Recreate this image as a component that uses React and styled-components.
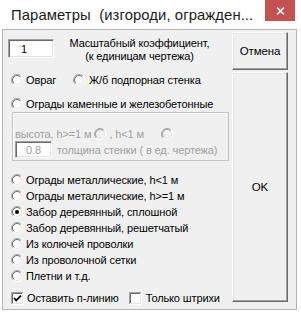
import React from "react";
import styled, { createGlobalStyle } from "styled-components";

const Global = createGlobalStyle`
  html, body { margin: 0; padding: 0; background: #fff; }
  body { font-family: "Liberation Sans", Arial, sans-serif; }
`;

const Window = styled.div`
  width: 301px;
  height: 317px;
  background: #fff;
  display: flex;
  flex-direction: column;
  overflow: hidden;
`;

const TitleBar = styled.div`
  height: 29px;
  display: flex;
  justify-content: space-between;
  align-items: flex-start;
  flex-shrink: 0;
`;

const Title = styled.div`
  padding: 7px 0 0 11px;
  font-family: "Liberation Sans", Arial, sans-serif;
  font-size: 14.8px;
  letter-spacing: 0.1px;
  line-height: 16px;
  color: #1a1a1a;
  white-space: pre;
`;

const CloseBtn = styled.div`
  width: 30px;
  height: 21px;
  margin-right: 6px;
  background: #c75050;
  display: flex;
  align-items: center;
  justify-content: center;
`;

const Client = styled.div`
  margin: 0 4px 7px 2px;
  height: 281px;
  box-sizing: border-box;
  border: 1px solid #b4b4b4;
  background: #f0f0f0;
  display: flex;
  font-family: "Liberation Sans", Arial, sans-serif;
  font-size: 11px;
  letter-spacing: -0.12px;
  color: #000;
`;

const LeftCol = styled.div`
  width: 226px;
  display: flex;
  flex-direction: column;
`;

const RightCol = styled.div`
  margin-left: 3px;
  width: 56px;
  padding-top: 2px;
  display: flex;
  flex-direction: column;
  gap: 2px;
`;

const Button = styled.div`
  height: ${(p) => p.$h}px;
  box-sizing: border-box;
  border: 1px solid;
  border-color: #fff #696969 #696969 #fff;
  box-shadow: inset -1px -1px 0 #a0a0a0, inset 1px 1px 0 #e3e3e3;
  background: #f0f0f0;
  display: flex;
  align-items: center;
  justify-content: center;
  font-size: 11.5px;
`;

const TopRow = styled.div`
  margin-top: 6px;
  height: 28px;
  display: flex;
  align-items: flex-start;
`;

const TextBox = styled.div`
  margin-left: ${(p) => p.$ml || 0}px;
  margin-top: ${(p) => p.$mt || 0}px;
  width: ${(p) => p.$w}px;
  height: ${(p) => p.$h}px;
  box-sizing: border-box;
  border: 1px solid;
  border-color: #a0a0a0 #fff #fff #a0a0a0;
  box-shadow: inset 1px 1px 0 #696969, inset -1px -1px 0 #e3e3e3;
  background: #fff;
  color: ${(p) => (p.$disabled ? "#a0a0a0" : "#000")};
  display: flex;
  align-items: center;
  justify-content: ${(p) => (p.$center ? "center" : "flex-start")};
  padding-left: ${(p) => (p.$center ? 0 : 12)}px;
  flex-shrink: 0;
`;

const ScaleLabel = styled.div`
  width: 171px;
  text-align: center;
  line-height: 13px;
  margin-top: 1px;
`;

const Row = styled.div`
  height: 16px;
  margin-top: ${(p) => p.$mt || 0}px;
  padding-left: 8px;
  display: flex;
  align-items: center;
`;

const Option = styled.label`
  display: flex;
  align-items: center;
  gap: ${(p) => (p.$gap ?? 3)}px;
  margin-right: ${(p) => p.$mr || 0}px;
  white-space: nowrap;
`;

const Frame = styled.div`
  margin-left: 9px;
  width: 217px;
  height: 49px;
  box-sizing: border-box;
  border: 1px solid #c4c4c4;
  box-shadow: inset 1px 1px 0 #fff;
  display: flex;
  flex-direction: column;
  padding: 14px 0 0 2px;
`;

const FrameRow = styled.div`
  height: ${(p) => p.$h}px;
  display: flex;
  align-items: center;
  gap: ${(p) => p.$gap || 0}px;
  color: #a0a0a0;
  white-space: pre;
`;

const Spaced = styled.span`
  display: inline-flex;
  align-items: center;
  margin-left: ${(p) => p.$ml || 0}px;
`;

const Radio = ({ checked, disabled }) => (
  <svg width="12" height="12" viewBox="0 0 12 12" style={{ flexShrink: 0 }}>
    <circle cx="6" cy="6" r="5" fill={disabled ? "#f0f0f0" : "#fff"} />
    <path d="M2.111 9.889 A5.5 5.5 0 0 1 9.889 2.111" fill="none" stroke="#a0a0a0" />
    <path d="M2.111 9.889 A5.5 5.5 0 0 0 9.889 2.111" fill="none" stroke="#fff" />
    <path d="M2.818 9.182 A4.5 4.5 0 0 1 9.182 2.818" fill="none" stroke={disabled ? "#a0a0a0" : "#696969"} />
    <path d="M2.818 9.182 A4.5 4.5 0 0 0 9.182 2.818" fill="none" stroke="#e3e3e3" />
    {checked && <circle cx="6" cy="6" r="2" fill="#000" />}
  </svg>
);

const Check = ({ checked }) => (
  <svg width="13" height="13" viewBox="0 0 13 13" style={{ flexShrink: 0 }}>
    <rect x="0" y="0" width="13" height="13" fill="#fff" />
    <path d="M0.5 13 V0.5 H13" fill="none" stroke="#a0a0a0" />
    <path d="M1.5 12 V1.5 H12" fill="none" stroke="#696969" />
    <path d="M0 12.5 H12.5 V0" fill="none" stroke="#fff" />
    <path d="M1 11.5 H11.5 V1" fill="none" stroke="#e3e3e3" />
    {checked && (
      <path d="M3 6 L5.2 8.4 L10 3.6" fill="none" stroke="#000" strokeWidth="1.8" />
    )}
  </svg>
);

const listItems = [
  "Ограды металлические, h<1 м",
  "Ограды металлические, h>=1 м",
  "Забор деревянный, сплошной",
  "Забор деревянный, решетчатый",
  "Из колючей проволки",
  "Из проволочной сетки",
  "Плетни и т.д.",
];

export default function App() {
  return (
    <>
      <Global />
      <Window>
        <TitleBar>
          <Title>{"Параметры  (изгороди, огражден..."}</Title>
          <CloseBtn>
            <svg width="9" height="8" viewBox="0 0 9 8">
              <path d="M1 0.5 L8 7.5 M8 0.5 L1 7.5" stroke="#fff" strokeWidth="1.6" />
            </svg>
          </CloseBtn>
        </TitleBar>
        <Client>
          <LeftCol>
            <TopRow>
              <TextBox $ml={5} $mt={3} $w={46} $h={19}>1</TextBox>
              <ScaleLabel>
                Масштабный коэффициент,
                <br />
                (к единицам чертежа)
              </ScaleLabel>
            </TopRow>
            <Row $mt={8}>
              <Option $mr={17}>
                <Radio />
                Овраг
              </Option>
              <Option $gap={4}>
                <Radio />
                Ж/б подпорная стенка
              </Option>
            </Row>
            <Row $mt={8}>
              <Option>
                <Radio />
                Ограды каменные и железобетонные
              </Option>
            </Row>
            <Frame>
              <FrameRow $h={14}>
                {"высота, h>=1 м"}
                <Spaced $ml={3}>
                  <Radio disabled />
                </Spaced>
                <Spaced $ml={3}>{", h<1 м"}</Spaced>
                <Spaced $ml={17}>
                  <Radio disabled />
                </Spaced>
              </FrameRow>
              <FrameRow $h={17} $gap={5}>
                <TextBox $w={37} $h={17} $center $disabled>
                  0.8
                </TextBox>
                толщина стенки ( в ед. чертежа)
              </FrameRow>
            </Frame>
            {listItems.map((t, i) => (
              <Row key={t} $mt={i === 0 ? 11 : 0}>
                <Option>
                  <Radio checked={i === 2} />
                  {t}
                </Option>
              </Row>
            ))}
            <Row $mt={6}>
              <Option $mr={10}>
                <Check checked />
                Оставить п-линию
              </Option>
              <Option $gap={4}>
                <Check />
                Только штрихи
              </Option>
            </Row>
          </LeftCol>
          <RightCol>
            <Button $h={38}>Отмена</Button>
            <Button $h={230}>OK</Button>
          </RightCol>
        </Client>
      </Window>
    </>
  );
}
